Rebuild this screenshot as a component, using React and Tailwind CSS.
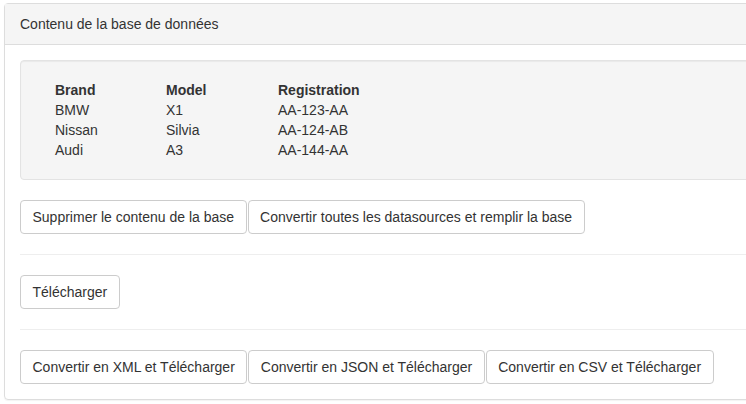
import React from 'react'

const cars = [
  { brand: 'BMW', model: 'X1', reg: 'AA-123-AA' },
  { brand: 'Nissan', model: 'Silvia', reg: 'AA-124-AB' },
  { brand: 'Audi', model: 'A3', reg: 'AA-144-AA' },
]

function Btn({ children }) {
  return (
    <button className="h-[34px] rounded-[4px] border border-[#ccc] bg-white px-[11.5px] text-[14px] leading-5 text-[#333]">
      {children}
    </button>
  )
}

export default function App() {
  return (
    <div
      className="w-[746px] h-[404px] overflow-hidden bg-white pl-[4px] pt-[3px]"
      style={{ fontFamily: '"Liberation Sans", Arial, sans-serif' }}
    >
      <div className="w-[790px] rounded-[4px] border border-[#ddd] text-[14px] leading-5 text-[#333] shadow-[0_1px_1px_rgba(0,0,0,0.05)]">
        <div className="h-[41px] border-b border-[#ddd] bg-[#f5f5f5] px-[15px] py-[10px]">
          Contenu de la base de données
        </div>
        <div className="p-[15px]">
          <div className="h-[120px] rounded-[4px] border border-[#e3e3e3] bg-[#f5f5f5] pl-[34px] pt-[19px] shadow-[inset_0_1px_1px_rgba(0,0,0,0.05)]">
            <div className="grid grid-cols-[111px_112px_auto] w-[340px]">
              <div className="font-bold">Brand</div>
              <div className="font-bold">Model</div>
              <div className="font-bold">Registration</div>
              {cars.map((c) => (
                <React.Fragment key={c.reg}>
                  <div>{c.brand}</div>
                  <div>{c.model}</div>
                  <div>{c.reg}</div>
                </React.Fragment>
              ))}
            </div>
          </div>

          <div className="mt-[20px] flex gap-px">
            <Btn>Supprimer le contenu de la base</Btn>
            <Btn>Convertir toutes les datasources et remplir la base</Btn>
          </div>

          <hr className="my-[20px] border-t border-[#eee]" />

          <div className="flex">
            <Btn>Télécharger</Btn>
          </div>

          <hr className="my-[20px] border-t border-[#eee]" />

          <div className="flex gap-px">
            <Btn>Convertir en XML et Télécharger</Btn>
            <Btn>Convertir en JSON et Télécharger</Btn>
            <Btn>Convertir en CSV et Télécharger</Btn>
          </div>
        </div>
      </div>
    </div>
  )
}
